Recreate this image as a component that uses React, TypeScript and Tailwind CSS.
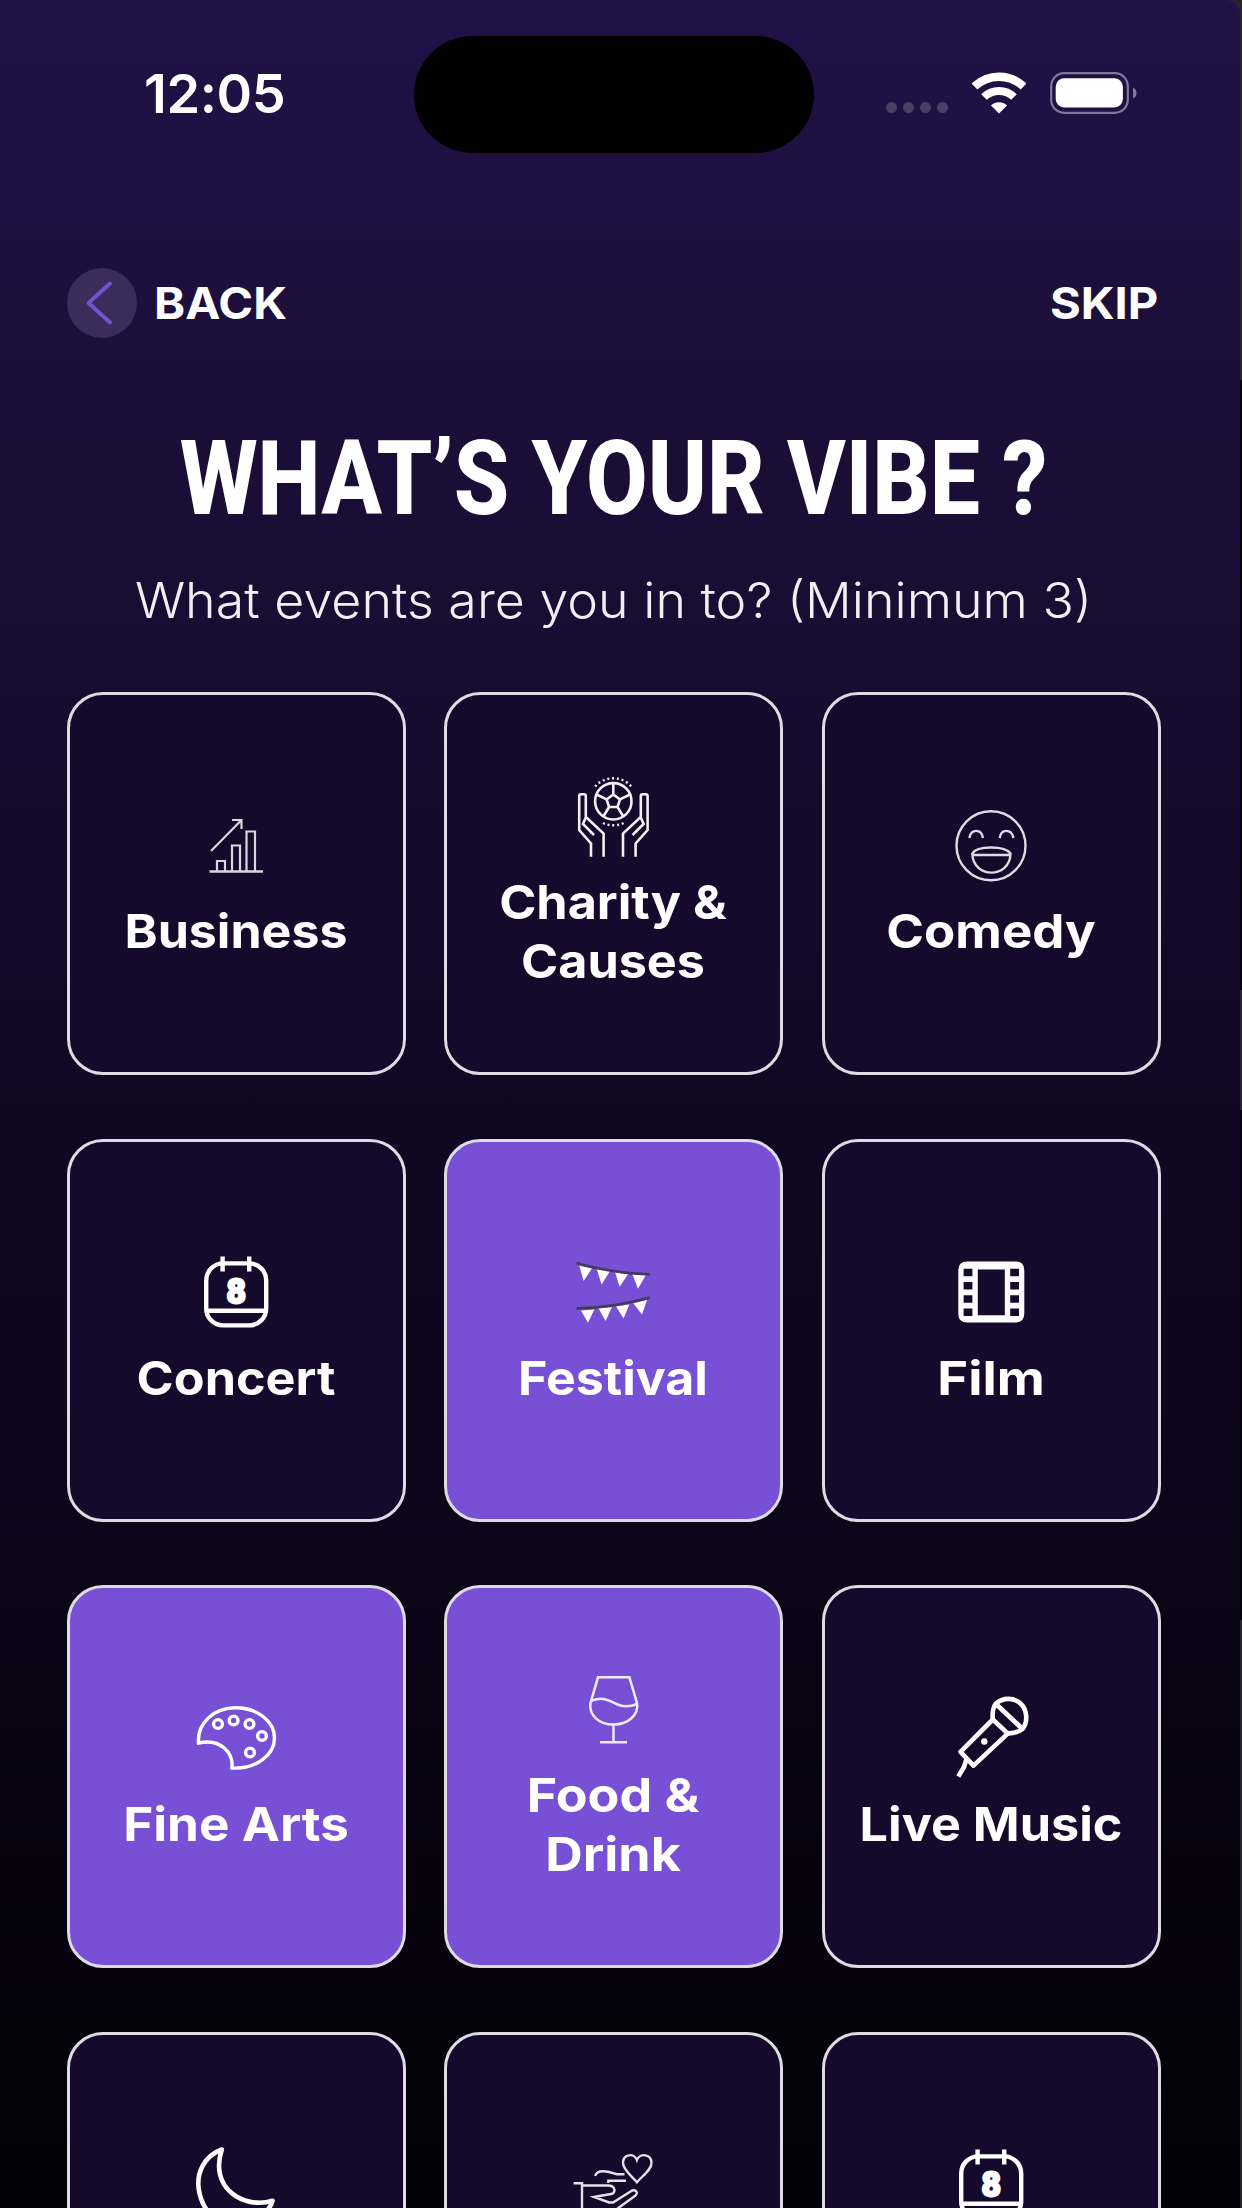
import React, { useState } from "react";
import clsx from "clsx";

const Business = () => (
  <g strokeWidth="2.2" stroke="#d9d6df">
    <path d="M17 48 L47 17.5 M38 17 H47.5 V26" />
    <path d="M23 68 V58 H31 V68 M38 68 V42.5 H46 V68 M52.5 68 V28.5 H61 V68" />
    <path d="M15.5 68.5 H69" strokeWidth="2.4" />
  </g>
);

const Charity = () => (
  <g strokeWidth="2.6" stroke="#f1eff4">
    <circle cx="42.3" cy="27.3" r="18.2" />
    <path d="M42.3 20.5 L49 25.4 L46.5 33 H38.1 L35.6 25.4 Z" />
    <path d="M42.3 20.5 V10 M49 25.4 L59 20.5 M46.5 33 L52 42 M38.1 33 L32.6 42 M35.6 25.4 L25.6 20.5" />
    <path d="M24.2 12.5 A24 24 0 0 1 60.4 12.5" strokeDasharray="2 2.8" strokeWidth="2.4" />
    <path d="M32 49 A24 24 0 0 0 52.6 49" strokeDasharray="2 2.8" strokeWidth="2.4" />
    <path d="M20 82.7 V69.5 L8.2 56 V22 Q8.2 20.3 10 20.3 H13 Q14.8 20.3 14.8 22 V43 L32.6 59.5 V82.7 M15 43 L12 50 L23 61" />
    <path d="M64.6 82.7 V69.5 L76.6 56 V22 Q76.6 20.3 74.6 20.3 H71.6 Q69.8 20.3 69.8 22 V43 L52 59.5 V82.7 M69.6 43 L72.6 50 L61.6 61" />
  </g>
);

const Comedy = () => (
  <g strokeWidth="2.4" stroke="#dedbe4">
    <circle cx="42" cy="42.7" r="34.5" />
    <path d="M20.3 35 C22 25.5 32.5 25.5 34 35 M50.7 35 C52 25.5 62.5 25.5 64.5 35" />
    <path d="M23.3 50.5 C28 42.5 56 42.5 61.5 50.5 C61 76 24 76 23.3 50.5 Z M24 52 H61" />
  </g>
);

const CalendarIcon = () => (
  <g strokeWidth="4.4">
    <rect x="12.2" y="13.4" width="60" height="62" rx="17" />
    <path d="M28.6 6.5 V21.5 M55.2 6.5 V21.5 M12.5 60.7 H72" />
    <text
      x="42.3"
      y="53.4"
      textAnchor="middle"
      fill="#fff"
      strokeWidth="3"
      strokeLinejoin="round"
      className="font-['Roboto',sans-serif] text-[33px] font-bold"
    >
      8
    </text>
  </g>
);

const Festival = () => (
  <g stroke="none" fill="#fff">
    <path d="M8.3 15.7 L21 18.4 L12.6 31 Z M25.6 18.7 L39 21 L30.6 34.4 Z M44 22 L57.3 23.7 L48.6 36.8 Z M61.3 24 L75 24.7 L67 38.7 Z" />
    <path d="M10 60.4 L23.3 59.4 L17 72.7 Z M27.6 58.6 L41 57 L34.6 71 Z M45 56.6 L58.3 54.4 L52.6 68.4 Z M62.3 53.2 L76 50 L71 64.6 Z" />
    <path
      d="M5.6 13 Q41 23.3 79 24.4 M5.6 58.4 Q42 57.7 79 47.5"
      fill="none"
      stroke="#45395c"
      strokeWidth="2.6"
    />
  </g>
);

const Film = () => (
  <g stroke="none" fill="#fff" fillRule="evenodd">
    <path
      d="M18 11.6 H66.6 Q75.3 11.6 75.3 20.3 V63.7 Q75.3 72.4 66.6 72.4 H18 Q9.3 72.4 9.3 63.7 V20.3 Q9.3 11.6 18 11.6 Z
      M28.8 19.4 V65.2 H55.8 V19.4 Z
      M14.6 18.7 h8.8 v7.5 h-8.8 Z M14.6 32.1 h8.8 v7.5 h-8.8 Z M14.6 45.3 h8.8 v7.5 h-8.8 Z M14.6 58.6 h8.8 v7.5 h-8.8 Z
      M61.2 18.7 h8.8 v7.5 h-8.8 Z M61.2 32.1 h8.8 v7.5 h-8.8 Z M61.2 45.3 h8.8 v7.5 h-8.8 Z M61.2 58.6 h8.8 v7.5 h-8.8 Z"
    />
  </g>
);

const FineArts = () => (
  <g strokeWidth="3.4">
    <path d="M4.5 47 C3 27 20 11.8 41.5 11.8 C63 11.8 80.5 25 80.5 42 C80.5 59 62 73.5 38 72 C39.5 57 27 42 4.5 47 Z" />
    <circle cx="24" cy="28" r="4.4" />
    <circle cx="39.6" cy="24.5" r="4.4" />
    <circle cx="55.5" cy="28" r="4.4" />
    <circle cx="68" cy="40" r="4.4" />
    <circle cx="56" cy="56.5" r="4.4" />
  </g>
);

const Drink = () => (
  <g strokeWidth="2.5" stroke="#efeafb">
    <path d="M27 10.3 H58.4 L66 36 C68 48 57 57.6 42.5 57.6 C28 57.6 17.5 48 19.5 36 Z" />
    <path d="M20.5 33.8 C34 28.5 41 35.5 48 38 S60 39.5 66 37 M42.5 57.6 V75 M29 75.2 H56" />
  </g>
);

const Mic = () => (
  <g strokeWidth="4.6" strokeLinejoin="round">
    <path d="M46.5 8 C54 1 65 1.5 71.5 7.5 C78.5 14 79 26 73.5 33 C69 36.5 64 37.5 58.7 37.4 L43.8 23.5 C43.3 18 43.8 12 46.5 8 Z" />
    <path d="M47.5 8.5 L73.5 33" strokeWidth="4.8" />
    <path d="M43.8 23.5 L11.5 55.8 L24.5 69.6 L58.7 37.6 M17.5 63 L15 71 L9.3 80.5" />
    <circle cx="35.3" cy="45.5" r="3.2" fill="#fff" stroke="none" />
  </g>
);

const Moon = () => (
  <g strokeWidth="4.6" strokeLinejoin="round">
    <path d="M27.8 6.5 C10 13 2.5 30 4.7 46 C8 68 22 81 42 81 C60 81 75 70 78.5 57.8 C49 66.5 15 45 27.8 6.5 Z" />
  </g>
);

const HandHeart = () => (
  <g strokeWidth="2.4" stroke="#e4e1e9">
    <path d="M65.9 39.3 C61 33 52 27 52 20 C52 11 63 9.5 65.9 17 C69 9.5 80.5 11 80.5 20 C80.5 27 71 33 65.9 39.3 Z" />
    <path d="M24.2 33 C25.5 27.5 33 28 38 29 L46 31.2 H53.5 M37.3 40 V37.7 H55" />
    <path d="M2.6 40.3 H11 V80 M11 42.5 H37 C45 42.5 45 50.5 40 51 L23 54 L38 59.5 H42 L59.5 48.5 C64 45.5 68 49 64.5 52.5 L46 66 L30 74 H11" />
  </g>
);

const categories = [
  { label: "Business", icon: Business, stretch: "scale-x-[1.065]" },
  { label: "Charity & Causes", icon: Charity, stretch: "scale-x-[1.07]" },
  { label: "Comedy", icon: Comedy, stretch: "scale-x-[1.085]" },
  { label: "Concert", icon: CalendarIcon, stretch: "scale-x-[1.07]" },
  { label: "Festival", icon: Festival, stretch: "scale-x-[1.065]" },
  { label: "Film", icon: Film, stretch: "scale-x-[1.12]" },
  { label: "Fine Arts", icon: FineArts, stretch: "scale-x-[1.09]" },
  { label: "Food & Drink", icon: Drink, stretch: "scale-x-[1.105]" },
  { label: "Live Music", icon: Mic, stretch: "scale-x-[1.07]" },
  { label: "", icon: Moon, stretch: "" },
  { label: "", icon: HandHeart, stretch: "" },
  { label: "", icon: CalendarIcon, stretch: "" },
];

const StatusBar = () => (
  <div className="flex h-[153px] items-start pt-9">
    <div className="w-[414px] pt-[27px] pl-[144px] text-[54px] leading-[61px] font-semibold tracking-[-0.4px]">
      12:05
    </div>
    <div className="h-[117px] w-[400px] rounded-full bg-black" />
    <div className="flex items-start pt-9 pl-[72px]">
      <div className="flex gap-1.5 pt-[30px]">
        {[0, 1, 2, 3].map((dot) => (
          <span key={dot} className="size-[11px] rounded-full bg-[#4a3d66]" />
        ))}
      </div>
      <svg viewBox="0 0 54 42" className="ml-[24px] h-[42px] w-[54px]" fill="none" stroke="#fff">
        <path d="M2.5 14.5 A35.5 35.5 0 0 1 51.5 14.5" strokeWidth="8.4" />
        <path d="M12 25 A21.5 21.5 0 0 1 42 25" strokeWidth="8" />
        <path d="M27 41.5 L19 33.5 A11.5 11.5 0 0 1 35 33.5 Z" fill="#fff" stroke="none" />
      </svg>
      <svg viewBox="0 0 88 42" className="ml-[24px] h-[42px] w-[88px]" fill="none">
        <rect x="1.2" y="1.2" width="76.6" height="39.6" rx="13" stroke="#81779a" strokeWidth="2.2" />
        <rect x="5.7" y="6.2" width="67.2" height="29.4" rx="8.5" fill="#fff" />
        <path d="M83 15.5 Q86.5 17 86.5 21 T83 26.5 Z" fill="#81779a" />
      </svg>
    </div>
  </div>
);

const App = () => {
  const [selected, setSelected] = useState<string[]>(["Festival", "Fine Arts", "Food & Drink"]);

  const toggle = (label: string) => {
    setSelected((prev) =>
      prev.includes(label) ? prev.filter((item) => item !== label) : [...prev, label]
    );
  };

  return (
    <div className="h-[2208px] w-[1242px] overflow-hidden bg-[linear-gradient(#262626_0_380px,#050505_380px_990px,#262626_990px_1110px,#050505_1110px_1620px,#262626_1620px)] font-['Inter','Liberation_Sans',sans-serif] text-white">
      <div className="h-full w-[1240px] overflow-hidden rounded-tr-[14px] bg-[linear-gradient(#201147_0px,#1c0f3b_340px,#170c30_700px,#110723_1110px,#0c061a_1500px,#080412_1750px,#04020b_2050px,#020107_2208px)]">
        <StatusBar />

        {/* --- NAVIGATION --- */}
        <div className="mt-[114px] flex h-[72px] items-center justify-between pr-[82px] pl-[67px]">
          <button className="flex cursor-pointer items-center gap-[17px]">
            <span className="flex size-[70px] items-center justify-center rounded-full bg-[#3c2c5c]">
              <svg viewBox="0 0 28 44" className="mr-1.5 h-[44px] w-[28px]" fill="none" stroke="#7750d6" strokeWidth="3.8" strokeLinecap="round" strokeLinejoin="round">
                <path d="M25 2.5 L3.5 22 L25 41.5" />
              </svg>
            </span>
            <span className="origin-left scale-x-[1.07] text-[44px] leading-none font-bold">BACK</span>
          </button>
          <button className="origin-right scale-x-[1.07] cursor-pointer text-[44px] leading-none font-bold">SKIP</button>
        </div>

        {/* --- HEADING --- */}
        <h1 className="mt-[80px] flex h-[120px] items-center justify-center pr-[14px] font-['Roboto',sans-serif] text-[104px] leading-none font-extrabold whitespace-nowrap">
          <span className="scale-x-[0.86]">WHAT’S YOUR VIBE ?</span>
        </h1>
        <p className="mt-[29px] flex h-[64px] items-center justify-center pr-[14px] text-[49px] leading-none font-light whitespace-nowrap text-[#f1eff4]">
          <span className="scale-x-[1.06]">What events are you in to? (Minimum 3)</span>
        </p>

        {/* --- CATEGORIES --- */}
        <div className="mt-[60px] grid w-[1162px] auto-rows-[383px] grid-cols-[repeat(3,339px)] gap-x-[38.4px] gap-y-[63.5px] pl-[67px]">
          {categories.map(({ label, icon: Icon, stretch }, index) => (
            <button
              key={index}
              onClick={() => toggle(label)}
              className={clsx(
                "flex cursor-pointer flex-col items-center justify-center rounded-[36px] border-[3px] border-[#dedce2] pr-px pb-[3px]",
                selected.includes(label) ? "bg-[#7750d6]" : "bg-[#150a2c]"
              )}
            >
              <svg viewBox="0 0 84 84" className="size-[84px] shrink-0 overflow-visible" fill="none" stroke="#fff">
                <Icon />
              </svg>
              <span
                className={clsx(
                  "mt-[15px] min-h-[58.5px] w-[266px] text-center text-[47px] leading-[58.5px] font-bold",
                  stretch
                )}
              >
                {label}
              </span>
            </button>
          ))}
        </div>
      </div>
    </div>
  );
};

export default App;
